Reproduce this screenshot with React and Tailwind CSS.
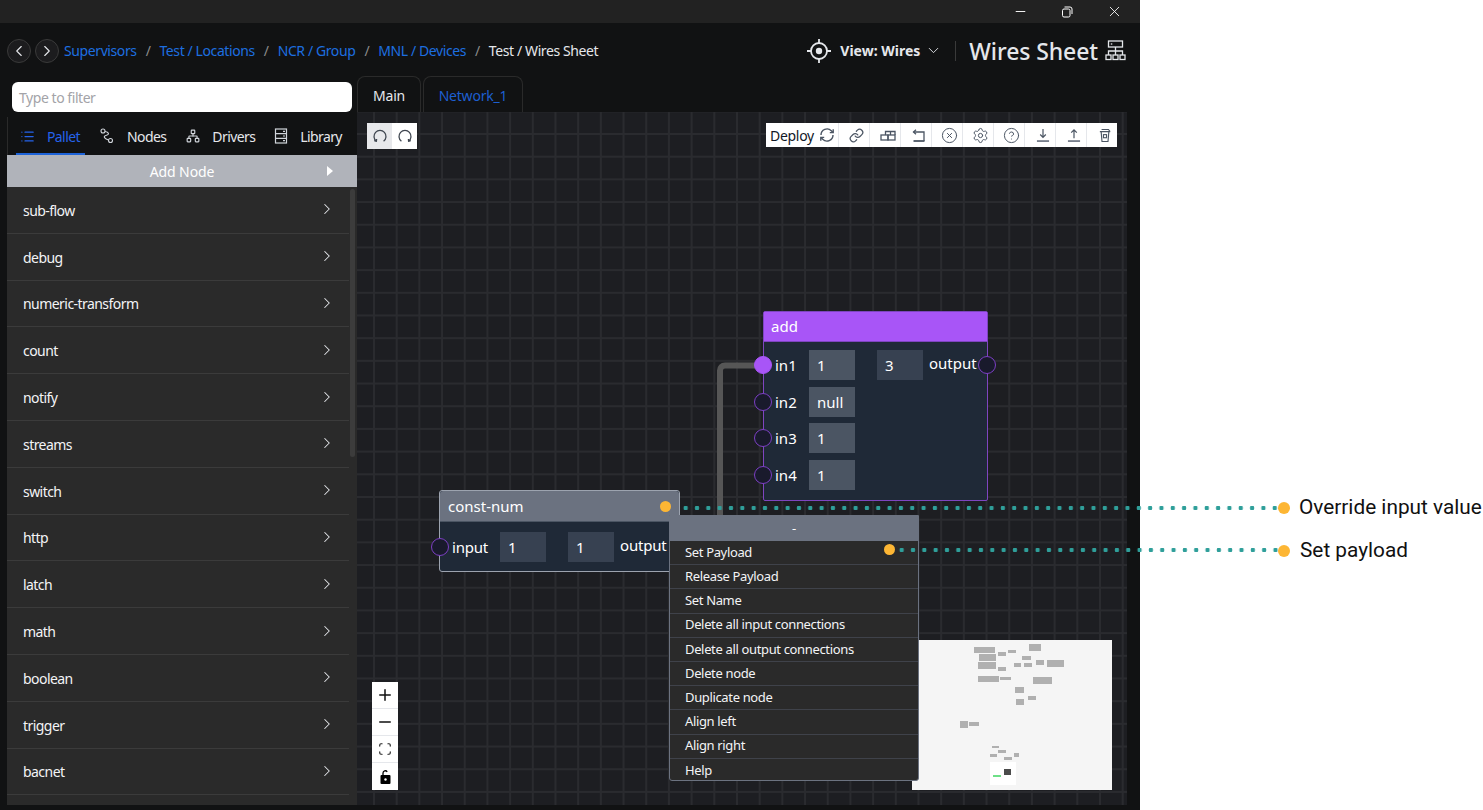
import React from 'react';
import {
  ChevronLeft, ChevronRight, ChevronDown, Minus, X, List, Network, CircleX, Settings,
  CircleHelp, Link, Plus, Scan,
} from 'lucide-react';

const crumbs = ['Supervisors', 'Test / Locations', 'NCR / Group', 'MNL / Devices'];
const pallet = ['sub-flow', 'debug', 'numeric-transform', 'count', 'notify', 'streams', 'switch', 'http', 'latch', 'math', 'boolean', 'trigger', 'bacnet'];
const menuItems = ['Release Payload', 'Set Name', 'Delete all input connections', 'Delete all output connections', 'Delete node', 'Duplicate node', 'Align left', 'Align right', 'Help'];

// minimap blocks, in px of the 200x150 map
const miniBlocks = [
  [62, 7, 21, 6], [67, 14, 17, 7], [86, 12, 8, 4], [96, 10, 8, 3], [117, 4, 12, 7],
  [110, 16, 9, 4], [66, 22, 18, 7], [102, 23, 7, 4], [112, 23, 8, 4], [124, 20, 8, 5], [135, 20, 17, 7],
  [86, 27, 8, 4], [66, 36, 21, 6], [88, 37, 11, 3], [121, 37, 19, 7], [103, 47, 9, 6], [116, 56, 8, 4],
  [104, 59, 8, 6], [48, 81, 8, 7], [57, 82, 10, 4], [80, 106, 7, 2], [86, 110, 8, 3], [78, 114, 7, 3],
  [92, 117, 8, 3], [102, 113, 5, 4],
];

const Port = ({ active, className = '' }) => (
  <span className={`block w-[18px] h-[18px] shrink-0 rounded-full border ${active ? 'bg-[#a855f7] border-[#a855f7]' : 'bg-[#191a2c] border-[#7c3fc4]'} ${className}`}></span>
);

const ValueBox = ({ children, dim }) => (
  <div className={`w-[46px] h-[30px] shrink-0 flex items-center pl-[8px] text-[15px] text-white ${dim ? 'bg-[#374151]' : 'bg-[#4b5563]'}`}>{children}</div>
);

const Arc = ({ flip }) => (
  <svg width="14" height="14" viewBox="0 0 14 14" fill="none" stroke="#3f4650" strokeWidth="1.3" className={flip ? '-scale-x-100' : ''}>
    <path d="M3.4 12.2A6 6 0 1 1 10.6 12.2" />
    <path d="M1.2 11.6l2.2.6.2-2.2" />
  </svg>
);

const NodesIcon = () => (
  <svg width="14" height="16" viewBox="0 0 14 16" fill="none" stroke="#d1d5db" strokeWidth="1.1">
    <circle cx="3" cy="3" r="2" />
    <circle cx="10.5" cy="12.5" r="2" />
    <path d="M5 3.5c4 .5 4.500 3 1.500 3.800S3 10 8.500 12" />
  </svg>
);

const LibraryIcon = () => (
  <svg width="14" height="16" viewBox="0 0 14 16" fill="none" stroke="#d1d5db" strokeWidth="1.2">
    <rect x="1.5" y="1" width="11" height="14" />
    <path d="M1.500 5.600h11M1.500 10.300h11" />
    <path d="M9 3.300h2M9 8h2M9 12.700h2" />
  </svg>
);

const RefreshIcon = () => (
  <svg width="16" height="16" viewBox="0 0 16 16" fill="none" stroke="#4b5563" strokeWidth="1.4">
    <path d="M2 8a6 6 0 0 1 10.300-4.200L14 5.500" />
    <path d="M14 8a6 6 0 0 1-10.300 4.200L2 10.500" />
    <path d="M14.200 2.200v3.400h-3.400M1.800 13.800v-3.400h3.400" />
  </svg>
);

const BricksIcon = () => (
  <svg width="16" height="11" viewBox="0 0 16 11" fill="none" stroke="#4b5563" strokeWidth="1.3">
    <rect x="1" y="5" width="7" height="5" />
    <rect x="8" y="5" width="7" height="5" />
    <path d="M5.500 5V1.500h9.500V5M10.500 1.500V5" />
  </svg>
);

const BackIcon = () => (
  <svg width="13" height="13" viewBox="0 0 13 13" fill="none" stroke="#4b5563" strokeWidth="1.300">
    <path d="M1.500 3h10.500v9" />
    <path d="M4 .8L1.500 3 4 5.200" />
    <path d="M1.500 12h11" strokeWidth="1.800" />
  </svg>
);

const TrayArrow = ({ up }) => (
  <svg width="14" height="14" viewBox="0 0 15 15" fill="none" stroke="#4b5563" strokeWidth="1.3">
    <path d="M1 14h13" stroke="#6b7280" strokeWidth="1.8" />
    {up ? <path d="M7.500 11V2M4.500 5l3-3 3 3" /> : <path d="M7.500 1v9M4.500 7l3 3 3-3" />}
  </svg>
);

const TrashIcon = () => (
  <svg width="12" height="15" viewBox="0 0 14 16" fill="none" stroke="#4b5563" strokeWidth="1.3">
    <path d="M1 3.500h12M3 1h8l2 2.500M2.500 3.500l1 11.500h7l1-11.500" />
    <rect x="5.200" y="7" width="3.600" height="3.600" />
  </svg>
);

const LockIcon = () => (
  <svg width="11" height="14" viewBox="0 0 11 14">
    <rect x="0.500" y="5" width="10" height="9" rx="1" fill="#000" />
    <circle cx="5.500" cy="9.500" r="1.200" fill="#fff" />
    <path d="M3 5V3a2.300 2.300 0 0 1 4.200-1.200" fill="none" stroke="#000" strokeWidth="1.300" />
  </svg>
);

const SheetIcon = () => (
  <svg width="21" height="21" viewBox="0 0 21 21" fill="none" stroke="#e5e7eb" strokeWidth="1.300" className="ml-[7px]">
    <rect x="3.500" y="1" width="14" height="6" />
    <path d="M5.800 4h1.500" />
    <path d="M10.500 7v4M3.500 15v-4h14v4M10.500 11v4" />
    <rect x="1" y="15" width="5" height="4.500" />
    <rect x="8" y="15" width="5" height="4.500" />
    <rect x="15" y="15" width="5" height="4.500" />
  </svg>
);

const MiniMap = () => (
  <svg width="200" height="150" viewBox="0 0 200 150" className="block">
    <rect width="200" height="150" fill="#f5f5f5" />
    <rect x="78" y="122" width="26" height="23" fill="#ffffff" />
    {miniBlocks.map(([x, y, w, h]) => (
      <rect key={`${x}-${y}`} x={x} y={y} width={w} height={h} fill="#b0b0b0" />
    ))}
    <rect x="81" y="135" width="8" height="2" fill="#6ee087" />
    <rect x="92" y="129" width="7" height="6" fill="#4b4b4b" />
  </svg>
);

const toolbarIcons = [
  <Link key="link" size={15} color="#4b5563" />,
  <BricksIcon key="bricks" />,
  <BackIcon key="back" />,
  <CircleX key="cancel" size={17} color="#4b5563" strokeWidth={1.4} />,
  <Settings key="settings" size={17} color="#4b5563" strokeWidth={1.4} />,
  <CircleHelp key="help" size={17} color="#4b5563" strokeWidth={1.4} />,
  <TrayArrow key="down" />,
  <TrayArrow key="up" up />,
  <TrashIcon key="trash" />,
];

const AddNode = () => (
  <div className="absolute left-[406px] top-[199px] w-[225px] h-[190px] bg-[#1f2937] border border-[#7e45c0] rounded-[2px] text-white text-[15px]">
    <div className="h-[30px] bg-[#a855f7] flex items-center pl-[7px] border-b border-[#7e45c0]">add</div>
    <div className="pt-[5px] flex flex-col">
      {[['in1', '1', true], ['in2', 'null'], ['in3', '1'], ['in4', '1']].map(([name, val, active]) => (
        <div key={name} className="h-[36.600px] flex items-center">
          <Port active={active} className="-ml-[10px]" />
          <span className="ml-[3px] w-[34px] shrink-0">{name}</span>
          <ValueBox>{val}</ValueBox>
          {active && (
            <div className="flex items-center ml-[22px]">
              <ValueBox dim>3</ValueBox>
              <span className="ml-[6px] -mt-[4px] w-[50px] shrink-0">output</span>
              <Port className="-ml-[1px] -mt-[1px]" />
            </div>
          )}
        </div>
      ))}
    </div>
  </div>
);

const ConstNode = () => (
  <div className="absolute left-[82px] top-[378px] w-[241px] h-[82px] bg-[#1f2937] border border-[#9ca3af] rounded-[3px] text-white text-[15px]">
    <div className="h-[31px] bg-[#6b7280] flex items-center justify-between pl-2 pr-2 rounded-t-[3px] border-b border-[#4b5563]">
      <span>const-num</span>
      <span className="block w-[11px] h-[11px] rounded-full bg-[#fdb634]"></span>
    </div>
    <div className="flex items-center h-[50px]">
      <Port className="-ml-[9px]" />
      <span className="ml-[3px] w-[48px] shrink-0 tracking-[-0.2px]">input</span>
      <ValueBox dim>1</ValueBox>
      <div className="ml-[22px]"><ValueBox dim>1</ValueBox></div>
      <span className="ml-[6px] -mt-[3px] tracking-[-0.2px]">output</span>
    </div>
  </div>
);

const NodeMenu = () => (
  <div className="absolute left-[312px] top-[403px] w-[250px] h-[266px] bg-[#2a2a2a] border border-[#6b7280] rounded-b-[3px] text-[13px] tracking-[-0.35px] text-[#f3f4f6] z-10">
    <div className="h-[25px] bg-[#6b7280] flex items-center justify-center text-white">-</div>
    <div className="h-[24.200px] flex items-center justify-between pl-[15px] pr-[23px] border-b border-[#3f424a]">
      <span>Set Payload</span>
      <span className="block w-[11px] h-[11px] rounded-full bg-[#fdb634] -mt-[6px]"></span>
    </div>
    {menuItems.map((item, i) => (
      <div key={item} className={`h-[24.200px] flex items-center pl-[15px] ${i < menuItems.length - 1 ? 'border-b border-[#3f424a]' : ''}`}>{item}</div>
    ))}
  </div>
);

const Canvas = () => (
  <div className="relative flex-1 overflow-hidden bg-[#1d1e22] bg-[linear-gradient(#2a2b2f_2px,transparent_2px),linear-gradient(90deg,#2a2b2f_2px,transparent_2px)] bg-[length:22.700px_22.700px] bg-[position:16px_21px]">
    <div className="absolute left-[10px] top-[11px] h-[26px] w-[50px] flex bg-white">
      <div className="flex-1 bg-[#e7e8eb] flex items-center justify-center"><Arc /></div>
      <div className="flex-1 flex items-center justify-center"><Arc flip /></div>
    </div>

    <div className="absolute left-[409px] top-[11px] h-[24px] w-[351px] flex bg-white divide-x divide-[#e5e7eb]">
      <div className="w-[73px] flex items-center pl-[4px] gap-[5px] text-[14px] tracking-[-0.3px] text-[#111827]">
        Deploy
        <RefreshIcon />
      </div>
      {toolbarIcons.map(icon => (
        <div key={icon.key} className="flex-1 flex items-center justify-center pl-[5px]">{icon}</div>
      ))}
    </div>

    <svg className="absolute left-[355px] top-[245px]" width="60" height="165" fill="none">
      <path d="M51 8.500H13a5 5 0 0 0-5 5V160" stroke="#565656" strokeWidth="6" />
    </svg>

    <AddNode />
    <ConstNode />
    <NodeMenu />

    <div className="absolute left-[555px] top-[528px]"><MiniMap /></div>

    <div className="absolute left-[15px] top-[570px] w-[26px] bg-white flex flex-col divide-y divide-[#e5e7eb]">
      <div className="h-[27px] flex items-center justify-center"><Plus size={18} color="#111" /></div>
      <div className="h-[27px] flex items-center justify-center"><Minus size={18} color="#111" /></div>
      <div className="h-[27px] flex items-center justify-center"><Scan size={14} color="#222" strokeWidth={2} /></div>
      <div className="h-[27px] flex items-center justify-center"><LockIcon /></div>
    </div>
  </div>
);

const Sidebar = () => (
  <div className="w-[350px] ml-[7px] flex flex-col shrink-0">
    <div className="pl-[5px] pr-[5px] pt-[6px] h-[41px]">
      <div className="h-[30px] bg-white rounded-md flex items-center pl-[7px] text-[14px] tracking-[-0.45px] text-[#a3a3a8]">Type to filter</div>
    </div>
    <div className="h-[38px] flex items-center border-l border-[#2a2a2a] text-[14px] tracking-[-0.6px] text-[#e5e7eb]">
      <div className="relative h-full flex items-center gap-[12px] pl-[12px] w-[77px] shrink-0 text-[#2563eb]">
        <List size={15} />
        <span>Pallet</span>
        <span className="absolute left-[8px] right-0 bottom-0 h-[2px] bg-[#1d63d8]"></span>
      </div>
      <div className="flex items-center gap-[13px] ml-[15px]"><NodesIcon />Nodes</div>
      <div className="flex items-center gap-[12px] ml-[20px]"><Network size={14} color="#d1d5db" />Drivers</div>
      <div className="flex items-center gap-[12px] ml-[19px]"><LibraryIcon />Library</div>
    </div>
    <div className="h-[32px] bg-[#b0b3ba] flex items-center justify-center relative text-[14px] tracking-[-0.1px] text-white">
      Add Node
      <span className="absolute right-[24px] top-[11px] w-0 h-0 border-y-[5px] border-y-transparent border-l-[6px] border-l-white"></span>
    </div>
    <div className="relative flex-1 bg-[#2a2a2a] overflow-hidden">
      {pallet.map(name => (
        <div key={name} className="h-[46.800px] mr-[8px] flex items-center justify-between pl-[16px] pr-[13px] border-b border-[#3b3b3b] text-[14px] tracking-[-0.55px] text-[#f3f4f6]">
          <span className="mt-[1px]">{name}</span>
          <ChevronRight size={18} color="#e5e7eb" strokeWidth={1.4} className="-mt-[1px]" />
        </div>
      ))}
      <div className="absolute right-[2px] top-[2px] w-[5px] h-[268px] bg-[#3c3c3c] rounded-sm"></div>
    </div>
  </div>
);

const App = () => (
  <div className="relative w-[1483px] h-[810px] bg-white overflow-hidden font-['Noto_Sans',sans-serif]">
    <div className="w-[1140px] h-full flex flex-col bg-[#111213]">
      <div className="h-[23px] bg-[#222222] flex items-center justify-end text-white shrink-0">
        <Minus size={15} strokeWidth={1.500} />
        <svg width="12" height="12" viewBox="0 0 12 12" fill="none" stroke="#fff" className="ml-[33px]">
          <rect x="1.500" y="3" width="7.500" height="8" rx="1.500" />
          <path d="M3.500 1h5.500a2 2 0 0 1 2 2v5" />
        </svg>
        <X size={17} strokeWidth={1.200} className="ml-[33px] mr-[17px]" />
      </div>

      <div className="h-[53px] shrink-0 flex items-center pl-[7px] pr-[14px] pt-[2px]">
        <div className="w-[24px] h-[24px] rounded-full bg-[#1c1c1e] border border-[#3a3a3a] flex items-center justify-center">
          <ChevronLeft size={18} color="#e5e7eb" strokeWidth={1.500} />
        </div>
        <div className="ml-[4px] w-[24px] h-[24px] rounded-full bg-[#1c1c1e] border border-[#3a3a3a] flex items-center justify-center">
          <ChevronRight size={18} color="#e5e7eb" strokeWidth={1.500} />
        </div>
        <div className="ml-[5px] flex items-center text-[14px] tracking-[-0.4px] text-[#1d6fe0]">
          {crumbs.map(c => (
            <React.Fragment key={c}>
              <span>{c}</span>
              <span className="mx-[9px] text-[#8b8b8b]">/</span>
            </React.Fragment>
          ))}
          <span className="text-[#e5e7eb]">Test / Wires Sheet</span>
        </div>
        <div className="ml-auto flex items-center text-[#e5e7eb]">
          <svg width="26" height="26" viewBox="0 0 26 26" fill="none" stroke="#e5e7eb" strokeWidth="1.800">
            <circle cx="13" cy="13" r="8" />
            <circle cx="13" cy="13" r="3.200" fill="#e5e7eb" stroke="none" />
            <path d="M13 1v4M13 21v4M1 13h4M21 13h4" />
          </svg>
          <span className="ml-[8px] text-[14px] font-bold">View: Wires</span>
          <ChevronDown size={17} strokeWidth={1.300} className="ml-[5px]" />
          <span className="ml-[13px] w-px h-[20px] bg-[#3a3a3a]"></span>
          <span className="ml-[13px] mt-[2px] text-[23px] font-medium tracking-[-0.1px]">Wires Sheet</span>
          <SheetIcon />
        </div>
      </div>

      <div className="flex-1 flex min-h-0 pb-[5px]">
        <Sidebar />
        <div className="flex-1 flex flex-col mr-[13px]">
          <div className="h-[36px] shrink-0 flex gap-[2px] text-[14px] tracking-[-0.2px]">
            <div className="w-[64px] border border-b-0 border-[#2a2a2a] rounded-t-lg flex items-center justify-center pt-[2px] text-[#e5e7eb]">Main</div>
            <div className="w-[100px] border border-b-0 border-[#2a2a2a] rounded-t-lg flex items-center justify-center pt-[2px] text-[#1d5fd0]">Network_1</div>
          </div>
          <Canvas />
        </div>
      </div>
    </div>

    {/* callouts over the screenshot */}
    <div className="absolute left-[680px] top-[506px] w-[598px] h-[4px] bg-[radial-gradient(circle,#2f9f9a_2px,transparent_2.500px)] bg-[length:11.330px_4px] z-20"></div>
    <div className="absolute left-[896px] top-[548px] w-[382px] h-[4px] bg-[radial-gradient(circle,#2f9f9a_2px,transparent_2.500px)] bg-[length:11.330px_4px] z-20"></div>
    <div className="absolute left-[1278px] top-[492px] flex items-center gap-[9px] whitespace-nowrap font-['Roboto',sans-serif] text-[20.800px] text-[#111] z-20">
      <span className="block w-[12px] h-[12px] rounded-full bg-[#fdb634]"></span>
      Override input value
    </div>
    <div className="absolute left-[1278px] top-[535px] flex items-center gap-[10px] whitespace-nowrap font-['Roboto',sans-serif] text-[20.800px] text-[#111] z-20">
      <span className="block w-[12px] h-[12px] rounded-full bg-[#fdb634]"></span>
      Set payload
    </div>
  </div>
);

export default App;
